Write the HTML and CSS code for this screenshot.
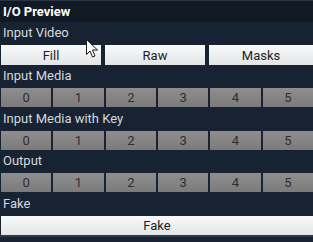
FILE: index.html
```html
<!DOCTYPE html>
<html>
<head>
<meta charset="utf-8">
<link rel="stylesheet" href="styles.css">
</head>
<body>
<div class="panel">
  <div class="header">I/O Preview</div>
  <div class="label">Input Video</div>
  <div class="row three">
    <div class="btn light">Fill</div>
    <div class="btn light">Raw</div>
    <div class="btn light">Masks</div>
  </div>
  <div class="label">Input Media</div>
  <div class="row six">
    <div class="btn gray">0</div><div class="btn gray">1</div><div class="btn gray">2</div><div class="btn gray">3</div><div class="btn gray">4</div><div class="btn gray">5</div>
  </div>
  <div class="label tall">Input Media with Key</div>
  <div class="row six">
    <div class="btn gray">0</div><div class="btn gray">1</div><div class="btn gray">2</div><div class="btn gray">3</div><div class="btn gray">4</div><div class="btn gray">5</div>
  </div>
  <div class="label">Output</div>
  <div class="row six">
    <div class="btn gray">0</div><div class="btn gray">1</div><div class="btn gray">2</div><div class="btn gray">3</div><div class="btn gray">4</div><div class="btn gray">5</div>
  </div>
  <div class="label tall">Fake</div>
  <div class="row one">
    <div class="btn light">Fake</div>
  </div>
  <div class="footer"></div>
  <svg class="cursor" width="13" height="20" viewBox="0 0 13 20">
    <path d="M0.5 0.5 L0.5 15.5 L4 12 L6.5 18 L9 17 L6.5 11 L11.5 11 Z" fill="#ffffff" stroke="#1a1a1a" stroke-width="1" stroke-linejoin="miter"/>
  </svg>
</div>
</body>
</html>
```
FILE: styles.css
```css
html, body {
  margin: 0;
  padding: 0;
  background: #172333;
}
.panel {
  position: relative;
  width: 313px;
  height: 242px;
  overflow: hidden;
  background: #172333;
  font-family: Roboto, "DejaVu Sans", sans-serif;
  font-size: 13px;
}
.header {
  height: 22px;
  box-sizing: border-box;
  border-top: 1px solid #2a3542;
  background: #111a24;
  color: #ffffff;
  font-weight: bold;
  line-height: 21px;
  padding-left: 3px;
}
.label {
  height: 23px;
  line-height: 21px;
  color: #d4d8dc;
  padding-left: 3px;
  box-sizing: border-box;
}
.label.tall {
  height: 24px;
  line-height: 23px;
}
.row {
  display: grid;
  height: 19px;
  padding-left: 1px;
}
.row.three {
  grid-template-columns: 100px 100px 1fr;
  gap: 4px;
  height: 20px;
}
.row.six {
  grid-template-columns: repeat(6, 1fr);
  gap: 2px;
}
.row.one {
  grid-template-columns: 1fr;
}
.btn {
  display: flex;
  align-items: center;
  justify-content: center;
  color: #1e1e1e;
}
.light {
  background: linear-gradient(#f8fafc, #e2e4e6);
}
.gray {
  background: linear-gradient(#8e8e8e, #7b7b7b);
  color: #2e2e2e;
}
.footer {
  height: 2px;
  background: #2d3a48;
}
.cursor {
  position: absolute;
  left: 86px;
  top: 39px;
}
```
